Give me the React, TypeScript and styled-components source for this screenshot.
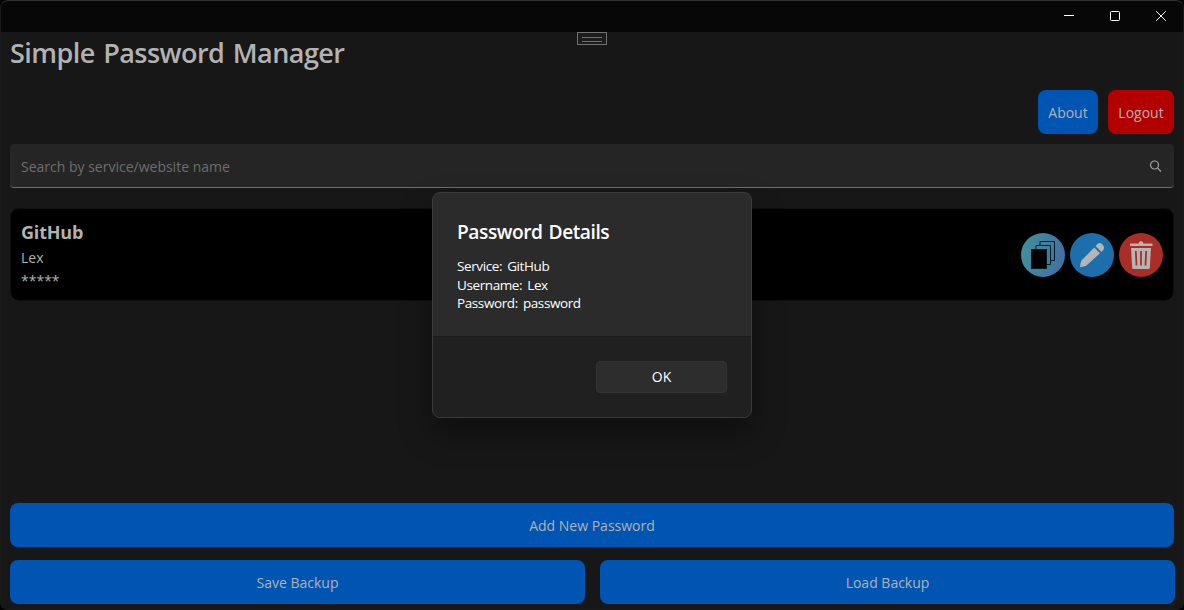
import React from "react";
import styled, { createGlobalStyle } from "styled-components";

const GlobalStyle = createGlobalStyle`
  * { box-sizing: border-box; }
  body { margin: 0; background: #000; overflow: hidden; }
  button { border: 0; padding: 0; font: inherit; }
`;

const Window = styled.div`
  position: relative;
  display: flex;
  flex-direction: column;
  width: 1184px;
  height: 610px;
  overflow: hidden;
  border-radius: 8px;
  background: #171717;
  color: #b2b2b2;
  font: 14px/20px "Open Sans", "Noto Sans", sans-serif;
  &::after {
    content: "";
    position: absolute;
    inset: 0;
    border: 1px solid #1a1a1a;
    border-top-color: #303030;
    border-radius: 8px;
    pointer-events: none;
  }
`;

const TitleBar = styled.header`
  display: flex;
  justify-content: flex-end;
  flex: 0 0 32px;
  background: #070707;
`;

const CaptionButton = styled.button`
  display: flex;
  width: 46px;
  height: 32px;
  background: none;
`;

const Content = styled.main`
  display: flex;
  flex-direction: column;
  flex: 1;
  padding: 0 10px 6px;
`;

const Title = styled.h1`
  margin: 0;
  height: 58px;
  padding-top: 2px;
  font-size: 27px;
  line-height: 38px;
  font-weight: 600;
  letter-spacing: -0.55px;
  word-spacing: 2px;
  white-space: nowrap;
`;

const Actions = styled.div`
  display: flex;
  justify-content: flex-end;
  gap: 10px;
`;

const Button = styled.button<{ $danger?: boolean; $width?: number }>`
  height: 44px;
  width: ${(p) => (p.$width ? `${p.$width}px` : "auto")};
  padding-top: 2px;
  border-radius: 8px;
  background: ${(p) => (p.$danger ? "#b20000" : "#0055b2")};
  color: #b2b2b2;
  white-space: nowrap;
`;

const SearchBox = styled.div`
  display: flex;
  align-items: center;
  justify-content: space-between;
  height: 44px;
  margin-top: 10px;
  padding: 2px 12.5px 0 11px;
  border-radius: 4px;
  border-bottom: 1px solid #6e6e6e;
  background: #252525;
  color: #6d6d6d;
`;

const Entry = styled.section`
  display: flex;
  align-items: flex-start;
  justify-content: space-between;
  height: 93px;
  margin-top: 20px;
  padding: 9px 10px 0;
  border: 1px solid #101010;
  border-radius: 9px;
  background: #000;
`;

const EntryText = styled.div`
  display: flex;
  flex-direction: column;
`;

const Service = styled.strong`
  font-size: 18px;
  line-height: 28px;
  font-weight: 700;
  letter-spacing: -0.2px;
`;

const Username = styled.span`
  line-height: 24px;
`;

const Secret = styled.span`
  line-height: 22px;
`;

const IconRow = styled.div`
  display: flex;
  gap: 5px;
  margin-top: 15px;
`;

const Footer = styled.footer`
  display: flex;
  flex-direction: column;
  gap: 13px;
  margin-top: auto;
`;

const BackupRow = styled.div`
  display: grid;
  grid-template-columns: 575px 575px;
  gap: 15px;
`;

const DebugHandle = styled.div`
  position: absolute;
  left: 577px;
  top: 32px;
  width: 30px;
  height: 13px;
  padding: 4px;
  border: 1px solid #707070;
  background: #1c1c1c;
  &::before {
    content: "";
    display: block;
    height: 3px;
    border: solid #707070;
    border-width: 1px 0;
  }
`;

const Dialog = styled.div`
  position: absolute;
  left: 432px;
  top: 192px;
  width: 320px;
  height: 226px;
  display: flex;
  flex-direction: column;
  overflow: hidden;
  border: 1px solid #3b3b3b;
  border-radius: 8px;
  background: #2b2b2b;
  color: #fff;
  box-shadow: 0 16px 32px rgba(0, 0, 0, 0.37);
`;

const DialogBody = styled.div`
  height: 143px;
  padding: 25px 24px 0;
  white-space: nowrap;
`;

const DialogTitle = styled.h2`
  margin: 0 0 11px;
  font-size: 19.2px;
  line-height: 28px;
  font-weight: 600;
  letter-spacing: -0.46px;
  word-spacing: 1.5px;
`;

const Detail = styled.div`
  font-size: 13.5px;
  line-height: 18.6px;
  letter-spacing: -0.4px;
  word-spacing: 2px;
`;

const DialogFooter = styled.div`
  display: flex;
  justify-content: flex-end;
  flex: 1;
  padding: 24px;
  border-top: 1px solid #1c1c1c;
  background: #202020;
`;

const OkButton = styled.button`
  width: 131px;
  height: 32px;
  border: 1px solid #333;
  border-radius: 4px;
  background: #2d2d2d;
  color: #fff;
`;

const CopyIcon = () => (
  <svg width="44" height="44" viewBox="0 0 44 44">
    <defs>
      <linearGradient id="copyFill" x1="0" y1="0" x2="1" y2="0.2">
        <stop offset="0" stopColor="#41919b" />
        <stop offset="1" stopColor="#3f73a3" />
      </linearGradient>
    </defs>
    <circle cx="22" cy="22" r="22" fill="url(#copyFill)" />
    <g fill="none" stroke="#0a1c22" strokeWidth="1">
      <path d="M19 12.500V8.500H33.500V27.500H29.500" />
      <path d="M15 16.500V12.500H29.500V31.500H25.500" />
      <rect x="10.500" y="16.500" width="15" height="19" fill="#000" />
    </g>
  </svg>
);

const EditIcon = () => (
  <svg width="44" height="44" viewBox="0 0 44 44">
    <circle cx="22" cy="22" r="22" fill="#1c6fab" />
    <g fill="#b5b5b5">
      <path d="M24.200 14.500L30 20.300L16.500 32.500Q15.500 33.300 10 34Q10.300 29.500 11.500 27.500Z" />
      <path d="M25.500 13L28 10.600Q29.500 9.300 31.300 10.600L33.300 12.600Q34.600 14.500 33.700 16.300L31.500 18.900Z" />
    </g>
  </svg>
);

const TrashIcon = () => (
  <svg width="44" height="44" viewBox="0 0 44 44">
    <circle cx="22" cy="22" r="22" fill="#a92e28" />
    <g fill="#b5b5b5">
      <path d="M11 10.500H19.500Q20 8 22 8T24.500 10.500H33.500V13H11Z" />
      <path d="M12 15H32L30.800 35Q30.700 36 29.500 36H14.500Q13.300 36 13.200 35Z" />
    </g>
    <path d="M16.800 18L17.500 32.500M22 18V32.500M27.200 18L26.500 32.500" stroke="#a92e28" strokeWidth="1.800" />
  </svg>
);

export default function App() {
  return (
    <>
      <GlobalStyle />
      <Window>
        <TitleBar>
          <CaptionButton aria-label="Minimize">
            <svg width="46" height="32"><path d="M18 15.500h10" stroke="#fff" /></svg>
          </CaptionButton>
          <CaptionButton aria-label="Maximize">
            <svg width="46" height="32"><rect x="18.500" y="11.500" width="9" height="9" rx="1" fill="none" stroke="#fff" /></svg>
          </CaptionButton>
          <CaptionButton aria-label="Close">
            <svg width="46" height="32"><path d="M18.200 11.200l9.600 9.600M27.800 11.200l-9.600 9.600" stroke="#fff" /></svg>
          </CaptionButton>
        </TitleBar>
        <Content>
          <Title>Simple Password Manager</Title>
          <Actions>
            <Button $width={60}>About</Button>
            <Button $danger $width={66}>Logout</Button>
          </Actions>
          <SearchBox>
            <span>Search by service/website name</span>
            <svg width="13" height="13" viewBox="0 0 13 13" fill="none" stroke="#a0a0a0" strokeWidth="1.200">
              <circle cx="5.500" cy="5" r="4" />
              <path d="M8.400 7.900L12 11.500" />
            </svg>
          </SearchBox>
          <Entry>
            <EntryText>
              <Service>GitHub</Service>
              <Username>Lex</Username>
              <Secret>*****</Secret>
            </EntryText>
            <IconRow>
              <CopyIcon />
              <EditIcon />
              <TrashIcon />
            </IconRow>
          </Entry>
          <Footer>
            <Button>Add New Password</Button>
            <BackupRow>
              <Button>Save Backup</Button>
              <Button>Load Backup</Button>
            </BackupRow>
          </Footer>
        </Content>
        <DebugHandle />
        <Dialog role="dialog">
          <DialogBody>
            <DialogTitle>Password Details</DialogTitle>
            <Detail>Service: GitHub</Detail>
            <Detail>Username: Lex</Detail>
            <Detail>Password: password</Detail>
          </DialogBody>
          <DialogFooter>
            <OkButton>OK</OkButton>
          </DialogFooter>
        </Dialog>
      </Window>
    </>
  );
}
